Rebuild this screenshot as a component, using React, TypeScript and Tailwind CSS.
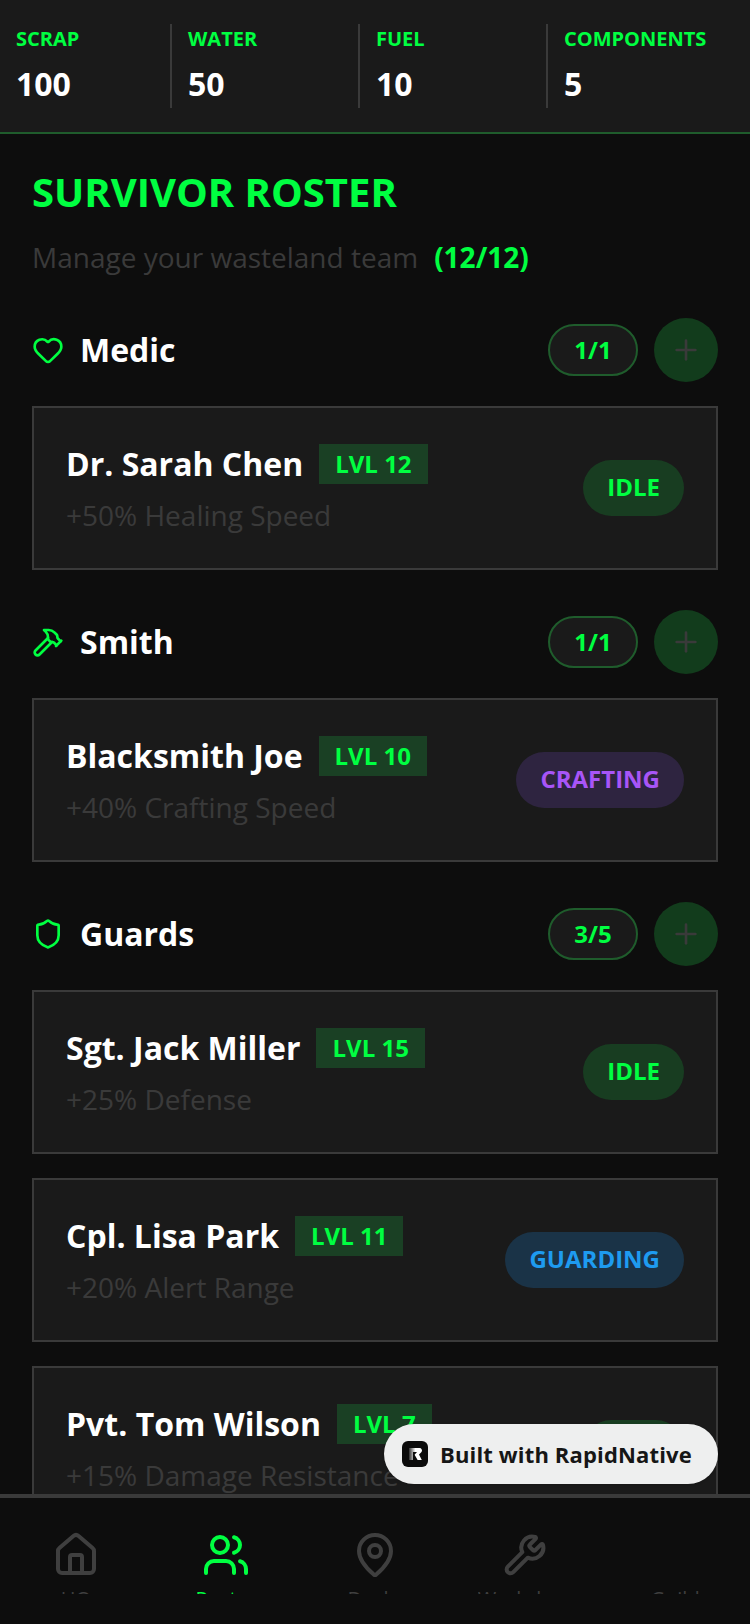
import React from 'react'
import { Hammer, Heart, House, MapPin, Plus, Shield, Users, Wrench } from 'lucide-react'

const RESOURCES = [
    { label: 'SCRAP', value: 100 },
    { label: 'WATER', value: 50 },
    { label: 'FUEL', value: 10 },
    { label: 'COMPONENTS', value: 5 },
]

type Status = 'IDLE' | 'CRAFTING' | 'GUARDING'

const STATUS_STYLES: Record<Status, string> = {
    IDLE: 'bg-[#183d21] text-[#00ff41]',
    CRAFTING: 'bg-[#2e2440] text-[#a855f7]',
    GUARDING: 'bg-[#1a3347] text-[#1e9bf0]',
}

const SECTIONS = [
    {
        title: 'Medic',
        icon: <Heart size={32} />,
        count: '1/1',
        survivors: [{ name: 'Dr. Sarah Chen', level: 12, perk: '+50% Healing Speed', status: 'IDLE' as Status }],
    },
    {
        title: 'Smith',
        icon: <Hammer size={32} />,
        count: '1/1',
        survivors: [{ name: 'Blacksmith Joe', level: 10, perk: '+40% Crafting Speed', status: 'CRAFTING' as Status }],
    },
    {
        title: 'Guards',
        icon: <Shield size={32} />,
        count: '3/5',
        survivors: [
            { name: 'Sgt. Jack Miller', level: 15, perk: '+25% Defense', status: 'IDLE' as Status },
            { name: 'Cpl. Lisa Park', level: 11, perk: '+20% Alert Range', status: 'GUARDING' as Status },
            { name: 'Pvt. Tom Wilson', level: 7, perk: '+15% Damage Resistance', status: 'IDLE' as Status },
        ],
    },
]

const TABS = [
    { label: 'HQ', icon: <House size={48} /> },
    { label: 'Roster', icon: <Users size={48} />, active: true },
    { label: 'Docks', icon: <MapPin size={48} /> },
    { label: 'Workshop', icon: <Wrench size={44} strokeWidth={2.2} className="m-[2px]" /> },
    { label: 'Guild', icon: null },
]

const SurvivorCard: React.FC<{ name: string; level: number; perk: string; status: Status }> = ({ name, level, perk, status }) => (
    <div className="flex h-[164px] items-center justify-between border-2 border-[#3a3a3a] bg-[#1a1a1a] px-8">
        <div className="flex flex-col gap-2 pb-px">
            <div className="flex h-12 items-center gap-4">
                <span className="text-[32px] font-bold whitespace-nowrap text-white">{name}</span>
                <span className="flex h-10 items-center bg-[#1a4024] px-4 pb-px text-[24px] font-bold text-[#00ff41]">LVL {level}</span>
            </div>
            <span className="-mt-px flex h-10 items-center text-[28px] whitespace-nowrap text-[#3a3a3a]">{perk}</span>
        </div>
        <span className={`flex h-14 items-center rounded-full px-6 pb-[2px] text-[24px] font-bold ${STATUS_STYLES[status]}`}>{status}</span>
    </div>
)

export default function App() {
    return (
        <div className="relative flex h-[1624px] w-[750px] flex-col overflow-hidden bg-[#0d0d0d] font-['Open_Sans',sans-serif]">
            {/* Resources */}
            <div className="grid h-[134px] shrink-0 grid-cols-[172px_188px_188px_1fr] items-start border-b-2 border-[#1f5c2c] bg-[#1a1a1a] pt-6">
                {RESOURCES.map((res, i) => (
                    <div key={res.label} className={`flex h-[84px] flex-col pl-4 ${i < 3 ? 'border-r-2 border-[#3a3a3a]' : ''}`}>
                        <span className="text-[20px] leading-[30px] font-bold text-[#00ff41]">{res.label}</span>
                        <span className="mt-[8px] text-[32px] leading-[44px] font-bold text-white">{res.value}</span>
                    </div>
                ))}
            </div>

            {/* Roster */}
            <div className="min-h-0 flex-1 overflow-hidden px-8 pt-8">
                <h1 className="text-[40px] leading-[52px] font-bold text-[#00ff41]">SURVIVOR ROSTER</h1>
                <p className="mt-5 flex h-[38px] items-center text-[28px] text-[#3a3a3a]">
                    Manage your wasteland team
                    <span className="ml-4 font-bold text-[#00ff41]">(12/12)</span>
                </p>
                <div className="mt-[42px] flex flex-col gap-10">
                    {SECTIONS.map((section) => (
                        <div key={section.title} className="flex flex-col gap-6">
                            <div className="flex h-16 items-center justify-between">
                                <div className="flex items-center gap-4 text-[#00ff41]">
                                    {section.icon}
                                    <span className="text-[32px] font-bold text-white">{section.title}</span>
                                </div>
                                <div className="flex items-center gap-4">
                                    <span className="flex h-[52px] w-[90px] items-center justify-center rounded-full border-2 border-[#1f5c2c] bg-[#1a1a1a] text-[24px] font-bold text-[#00ff41]">
                                        {section.count}
                                    </span>
                                    <button className="flex h-16 w-16 items-center justify-center rounded-full bg-[#123c1c] text-[#3a3a3a]">
                                        <Plus size={32} />
                                    </button>
                                </div>
                            </div>
                            {section.survivors.map((survivor) => (
                                <SurvivorCard key={survivor.name} {...survivor} />
                            ))}
                        </div>
                    ))}
                </div>
            </div>

            {/* Tab bar */}
            <div className="z-10 grid h-[130px] shrink-0 grid-cols-5 border-t-4 border-[#3a3a3a] bg-[#0d0d0d] pt-[33px] pl-px">
                {TABS.map((tab) => (
                    <div key={tab.label} className={`flex flex-col items-center ${tab.active ? 'text-[#00ff41]' : 'text-[#3f3f3f]'}`}>
                        <div className="h-12 w-12">{tab.icon}</div>
                        <div className="mt-[6px] h-[9px] overflow-hidden text-[20px] leading-[27px] font-medium">{tab.label}</div>
                    </div>
                ))}
            </div>

            {/* Built with badge */}
            <div className="absolute top-[1424px] left-[384px] z-20 flex h-[60px] w-[334px] items-center gap-3 rounded-full bg-[#eeefef] pl-[18px] shadow-sm">
                <svg width="26" height="26" viewBox="0 0 26 26">
                    <defs>
                        <linearGradient id="logoFade" x1="0" x2="1" y1="0" y2="0">
                            <stop offset="0" stopColor="#fff" stopOpacity="0.15" />
                            <stop offset="0.5" stopColor="#fff" />
                        </linearGradient>
                    </defs>
                    <rect width="26" height="26" rx="6" fill="#0b0b0b" />
                    <path d="M7 7h10.5a2.5 2.5 0 0 1 2 4l-2.5 2.6 2.8 5.4h-4.2l-3-5.2 2.4-2.8H11v8H7z" fill="url(#logoFade)" />
                </svg>
                <span className="text-[22px] font-bold tracking-[0.15px] whitespace-nowrap text-[#161616]">Built with RapidNative</span>
            </div>
        </div>
    )
}
